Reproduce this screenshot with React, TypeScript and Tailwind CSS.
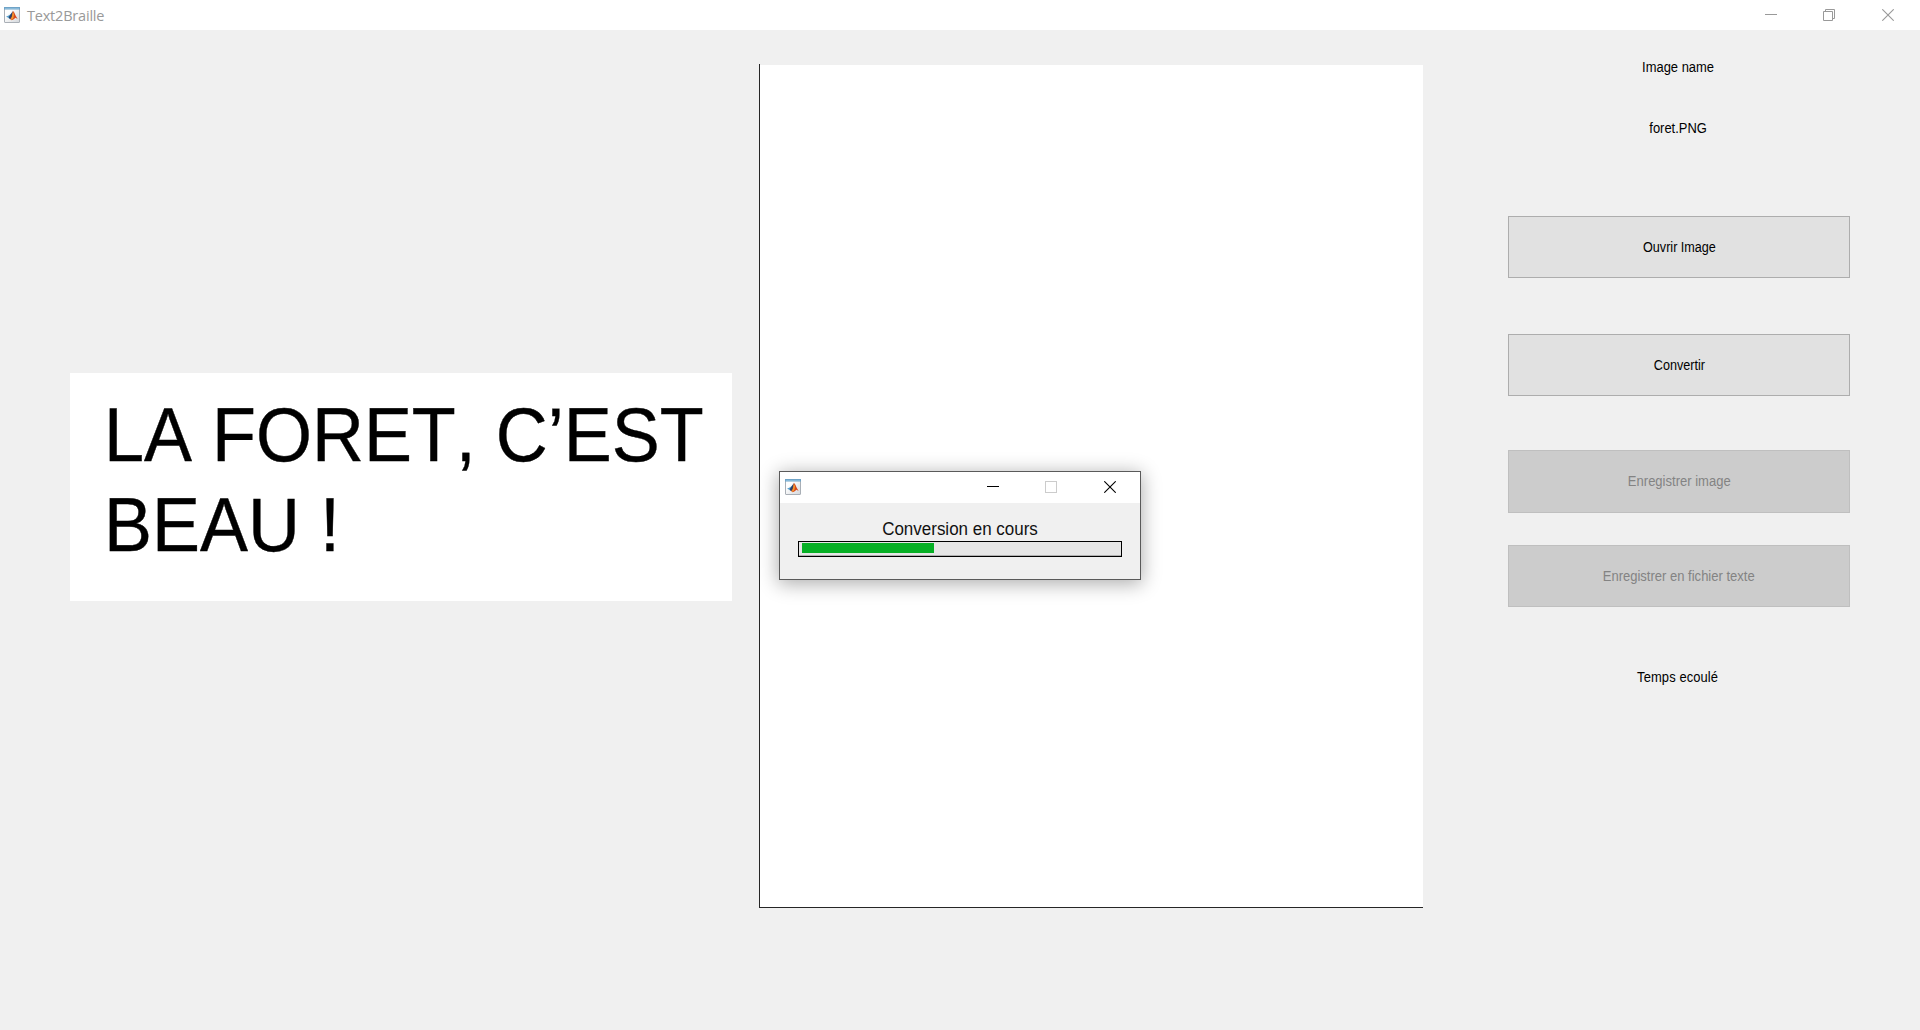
import type { ReactNode } from "react";

function MatlabIcon() {
  return (
    <svg className="block h-4 w-4 shrink-0" viewBox="0 0 16 16">
      <defs>
        <linearGradient id="frame" x1="0" y1="0" x2="1" y2="1">
          <stop offset="0.3" stopColor="#ffffff" />
          <stop offset="1" stopColor="#d3d6da" />
        </linearGradient>
      </defs>
      <rect x="0.5" y="0.5" width="15" height="15" rx="0.5" fill="url(#frame)" stroke="#a9afb6" />
      <rect x="0" y="0" width="16" height="2.5" fill="#6fa3c7" />
      <rect x="1" y="1" width="14" height="0.8" fill="#8fc0df" />
      <path d="M2 9.7 5.2 8.2 7.2 6.4 8.7 4.4 8 8.5 5.6 12 4 10.4Z" fill="#4f9bcb" />
      <path d="M5.2 9.5 8.8 4.2 8.4 10 6.4 12.2 4.8 10.8Z" fill="#2b3f66" />
      <path d="M8.9 3.8 10.4 5.8 11.6 8.6 13.6 12 11.5 10.8 9.4 12.6 7.6 13.3 6.2 12 7.6 10Z" fill="#d8481c" />
      <path d="M9 4.4 10 7.5 9.4 11 7.6 13 6.9 12.2 8 9.4Z" fill="#f39a2d" />
    </svg>
  );
}

function Minimize() {
  return (
    <svg className="block h-3 w-3" viewBox="0 0 12 12" shapeRendering="crispEdges">
      <rect x="0" y="5" width="12" height="1" fill="currentColor" />
    </svg>
  );
}

function Close() {
  return (
    <svg className="block h-3 w-3" viewBox="0 0 12 12" fill="none" stroke="currentColor">
      <path d="M0.3 0.3 11.7 11.7M11.7 0.3 0.3 11.7" strokeWidth="1.1" />
    </svg>
  );
}

function Label({ className = "pr-0.5", children }: { className?: string; children: ReactNode }) {
  return (
    <p className={`scale-x-[0.925] text-center text-[14px] leading-4 whitespace-nowrap ${className}`}>
      {children}
    </p>
  );
}

function PushButton({
  className = "",
  textClass = "scale-x-[0.93]",
  disabled = false,
  children,
}: {
  className?: string;
  textClass?: string;
  disabled?: boolean;
  children: ReactNode;
}) {
  return (
    <button
      type="button"
      disabled={disabled}
      className={`flex w-full items-center justify-center border text-[14px] leading-4 whitespace-nowrap ${
        disabled ? "border-[#bfbfbf] bg-[#cccccc] text-[#838383]" : "border-[#adadad] bg-[#e1e1e1] text-black"
      } ${className}`}
    >
      <span className={`block ${textClass}`}>{children}</span>
    </button>
  );
}

function ProgressDialog() {
  return (
    <div
      role="dialog"
      className="absolute top-[471px] left-[779px] flex h-[109px] w-[362px] flex-col border border-[#5a5a5a] bg-[#f0f0f0] shadow-[0_3px_18px_1px_rgba(0,0,0,0.32)]"
    >
      <div className="flex h-[31px] shrink-0 items-center bg-white pr-6 pb-px pl-[5px]">
        <MatlabIcon />
        <div className="ml-auto flex items-center">
          <Minimize />
          <div className="ml-[46px] h-3 w-3 border border-[#cccccc]" />
          <div className="ml-[47px]">
            <Close />
          </div>
        </div>
      </div>
      <p className="mt-4 scale-x-[0.97] text-center text-[17.5px] leading-5 whitespace-nowrap text-[#111111]">
        Conversion en cours
      </p>
      <div className="mx-[18px] mt-0.5 h-4 border border-black bg-[#e6e6e6]">
        <div className="h-[14px] border-b border-[#b0b0b0] pt-px pl-[3px]">
          <div className="h-[10px] w-[132px] bg-[#06b025]" />
        </div>
      </div>
    </div>
  );
}

export default function App() {
  return (
    <div className="relative flex h-[1030px] w-[1920px] flex-col overflow-hidden bg-[#f0f0f0] font-['Liberation_Sans',Arial,sans-serif] text-black">
      <header className="flex h-[30px] shrink-0 items-center bg-white pl-1 text-[#999999]">
        <MatlabIcon />
        <span className="ml-[7px] pt-0.5 font-['Open_Sans','Noto_Sans',sans-serif] text-[14.5px] leading-7 tracking-[-0.2px]">
          Text2Braille
        </span>
        <div className="ml-auto flex items-center pr-[26px]">
          <Minimize />
          <svg className="ml-[46px] block h-3 w-3" viewBox="0 0 12 12" fill="none" stroke="currentColor">
            <path d="M0.5 2.5h9v9h-9zM2.5 2.5v-2h9v9h-2" />
          </svg>
          <div className="ml-[47px]">
            <Close />
          </div>
        </div>
      </header>

      <main className="flex flex-1 items-start pl-[70px]">
        <section className="mt-[343px] h-[228px] w-[662px] bg-white pt-[17px] pl-[34px]">
          <div className="w-max origin-left scale-x-[0.953] text-[75.5px] leading-[90px] whitespace-nowrap [-webkit-text-stroke:0.4px_black] [font-kerning:none]">
            <div>LA FORET, C’EST</div>
            <div>BEAU !</div>
          </div>
        </section>

        <section className="mt-[34px] ml-[27px] h-[844px] w-[664px] border-b border-l border-[#262626] pt-px">
          <div className="h-full bg-white" />
        </section>

        <aside className="ml-[85px] flex w-[342px] flex-col pt-[29px]">
          <Label>Image name</Label>
          <Label className="mt-[45px] pr-0.5">foret.PNG</Label>
          <PushButton className="mt-20 h-[62px]" textClass="scale-x-[0.9]">Ouvrir Image</PushButton>
          <PushButton className="mt-14 h-[62px]" textClass="scale-x-[0.9]">Convertir</PushButton>
          <PushButton className="mt-[54px] h-[63px] pb-px" disabled>Enregistrer image</PushButton>
          <PushButton className="mt-8 h-[62px]" disabled>Enregistrer en fichier texte</PushButton>
          <Label className="mt-[62px] pr-[3px] tracking-[0.1px]">Temps ecoulé</Label>
        </aside>
      </main>

      <ProgressDialog />
    </div>
  );
}
